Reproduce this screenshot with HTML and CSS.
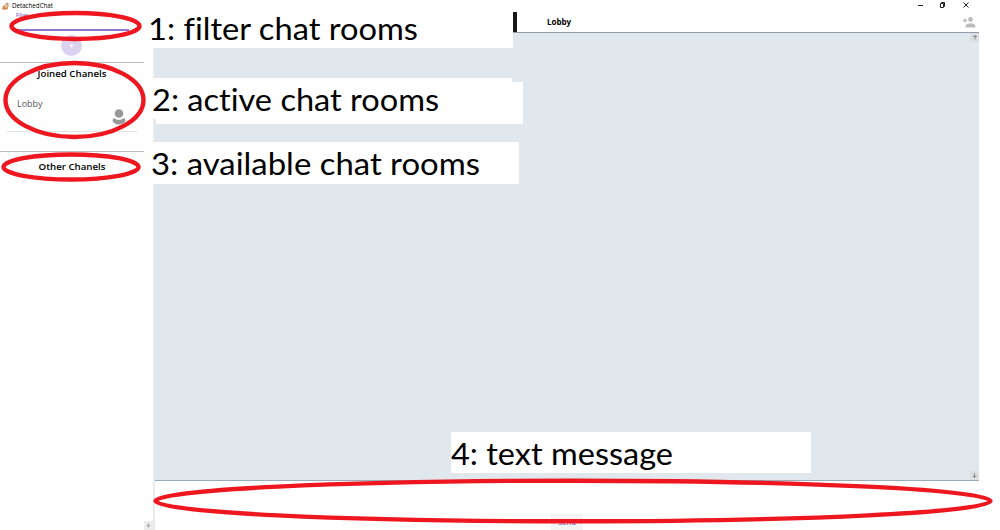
FILE: index.html
```html
<!DOCTYPE html>
<html lang="en">
<head>
<meta charset="utf-8">
<title>DetachedChat</title>
<link rel="stylesheet" href="styles.css">
</head>
<body>
<div class="window">
  <header class="titlebar">
    <svg class="app-icon" width="8" height="9" viewBox="0 0 8 9"><path d="M3 1h3v5H3z" fill="#e9c7a0"/><path d="M1 4l2-1v3l3-1v2L2 8 0 7z" fill="#d98d52"/><path d="M4 2l2-1v4" fill="none" stroke="#a8765a" stroke-width=".7"/></svg>
    <span class="app-name">DetachedChat</span>
    <svg class="controls" width="52" height="8" viewBox="0 0 52 8" fill="none" stroke="#222" stroke-width="1"><path d="M0 4.500h5M22.500 2.500h3v4h-3zM23.500 2.500v-1h3v4h-1M45.500 1.500l5 5M50.500 1.500l-5 5"/></svg>
  </header>
  <div class="columns">
    <aside class="sidebar">
      <div class="filter">
        <label class="filter-label">Filter</label>
        <div class="filter-line"></div>
        <button class="add">+</button>
      </div>
      <section class="joined">
        <h2 class="heading">Joined Chanels</h2>
        <div class="room">
          <span class="room-name">Lobby</span>
          <svg class="person" width="14" height="16" viewBox="0 0 14 16" fill="#999"><circle cx="7" cy="4.500" r="4.300"/><path d="M2 9Q7 13 12 9 14 10 13.300 12.500 11 15.500 7 15.500T.7 12.500Q0 10 2 9z"/></svg>
        </div>
      </section>
      <section class="other"><h2 class="heading">Other Chanels</h2></section>
      <div class="side-scroll"><svg width="9" height="9" viewBox="0 0 9 9"><path d="M4.500 2v4.500M2.500 4.500h4M3.500 5.500h2" stroke="#aaa" fill="none"/></svg></div>
    </aside>
    <main class="chat">
      <div class="chat-head">
        <span class="dark-edge"></span>
        <span class="chat-title">Lobby</span>
        <svg class="invite" width="13" height="11" viewBox="0 0 13 11" fill="#bcbcbc"><circle cx="7.500" cy="2.500" r="2.400"/><path d="M2.500 10.500V8.500Q4 6.300 7.500 6.300t5 2.200v2z"/><path d="M0 3.500h4M2 1.500v4" stroke="#bcbcbc" stroke-width="1.300"/></svg>
      </div>
      <div class="messages">
        <span class="scroll-btn"><svg width="9" height="9" viewBox="0 0 9 9"><path d="M3 3.500h4M5 2v4.500" stroke="#858b8f" stroke-width="1"/></svg></span>
        <span class="scroll-btn"><svg width="9" height="9" viewBox="0 0 9 9"><path d="M4.500 2v4M2.500 4.500l2 2 2-2" fill="none" stroke="#858b8f" stroke-width="1"/></svg></span>
      </div>
      <div class="composer"><button class="send">Send</button></div>
    </main>
  </div>
  <svg class="notes" width="1000" height="530" viewBox="0 0 1000 530">
    <g fill="#fff">
      <path d="M148 12h365v36H148zM152 78h360v4h11v42H156v-5h-4zM151 142h368v42H151zM451 432h360v41H451z"/>
    </g>
    <g fill="none" stroke="#ee161f" stroke-width="4.400">
      <ellipse cx="75.500" cy="26" rx="64" ry="13"/>
      <ellipse cx="74.500" cy="100" rx="69" ry="37"/>
      <ellipse cx="71" cy="167" rx="67.500" ry="12.500"/>
      <ellipse cx="573" cy="501" rx="417.500" ry="20.300"/>
    </g>
    <g class="note-text">
      <text x="148" y="40" textLength="270" lengthAdjust="spacingAndGlyphs">1: filter chat rooms</text>
      <text x="152" y="111" textLength="287" lengthAdjust="spacingAndGlyphs">2: active chat rooms</text>
      <text x="151" y="175" textLength="329" lengthAdjust="spacingAndGlyphs">3: available chat rooms</text>
      <text x="451" y="465" textLength="222" lengthAdjust="spacingAndGlyphs">4: text message</text>
    </g>
  </svg>
</div>
</body>
</html>
```
FILE: styles.css
```css
* { box-sizing: border-box; }
body { margin: 0; background: #fff; color: #000; font-family: "Open Sans", "Noto Sans", sans-serif; }
button { border: 0; padding: 0; font: inherit; }
.window { position: relative; width: 1000px; height: 530px; overflow: hidden; display: flex; flex-direction: column; }
.titlebar { height: 12px; padding: 0 30px 0 2px; display: flex; align-items: center; }
.app-name { margin-left: 2px; font-size: 6.2px; line-height: 12px; }
.controls { margin-left: auto; margin-bottom: 2px; }
.columns { flex: 1; display: flex; min-height: 0; }
.sidebar { width: 155px; border-right: 2px solid #e9ebec; display: flex; flex-direction: column; }
.filter { height: 50px; width: 144px; display: flex; flex-direction: column; }
.filter-label { padding-left: 16px; height: 17px; font-size: 5px; line-height: 7px; color: #673ab7; }
.filter-line { height: 2px; margin: 0 15px; background: #9474cf; }
.add { width: 21px; height: 21px; margin: 4px 0 0 61px; border-radius: 50%; background: #ddd1f0; color: #fff; font-size: 8px; font-weight: 700; line-height: 20px; }
.joined { width: 144px; height: 89px; border-top: 1px solid #bdbdbd; }
.heading { margin: 0; text-align: center; font-size: 9.7px; font-weight: 600; line-height: 14px; padding-top: 4px; }
.room { height: 51px; margin: 0 7px; padding: 0 11px 0 10px; display: flex; justify-content: space-between; border-bottom: 1px solid #e3e3e3; }
.room-name { font-size: 9px; line-height: 12px; padding-top: 17px; color: #555; }
.person { margin-top: 28px; }
.other { width: 144px; border-top: 1px solid #bdbdbd; }
.other .heading { padding-top: 8px; }
.side-scroll { margin-top: auto; align-self: flex-end; width: 9px; height: 9px; background: #ececec; display: flex; }
.chat { width: 824px; display: flex; flex-direction: column; }
.chat-head { height: 20px; padding-left: 358px; display: flex; align-items: center; }
.dark-edge { width: 4px; height: 20px; background: #171717; }
.chat-title { margin-left: 30px; font-size: 8px; font-weight: 700; line-height: 20px; }
.invite { margin-left: auto; margin-right: 3px; }
.messages { height: 449px; background: #e0e8ee; border-top: 1px solid #8c9cab; border-bottom: 1px solid #9aabba; display: flex; flex-direction: column; align-items: flex-end; justify-content: space-between; }
.scroll-btn { width: 9px; height: 9px; background: #dcdddf; display: flex; }
.composer { flex: 1; display: flex; justify-content: center; align-items: flex-end; }
.send { width: 32px; height: 16px; background: #f3f3f3; color: #6d3cc0; font-size: 7.5px; line-height: 17px; }
.notes { position: absolute; left: 0; top: 0; }
.note-text { font-family: Lato, "Open Sans", sans-serif; font-size: 30.5px; font-variant-ligatures: none; fill: #000; }
```
